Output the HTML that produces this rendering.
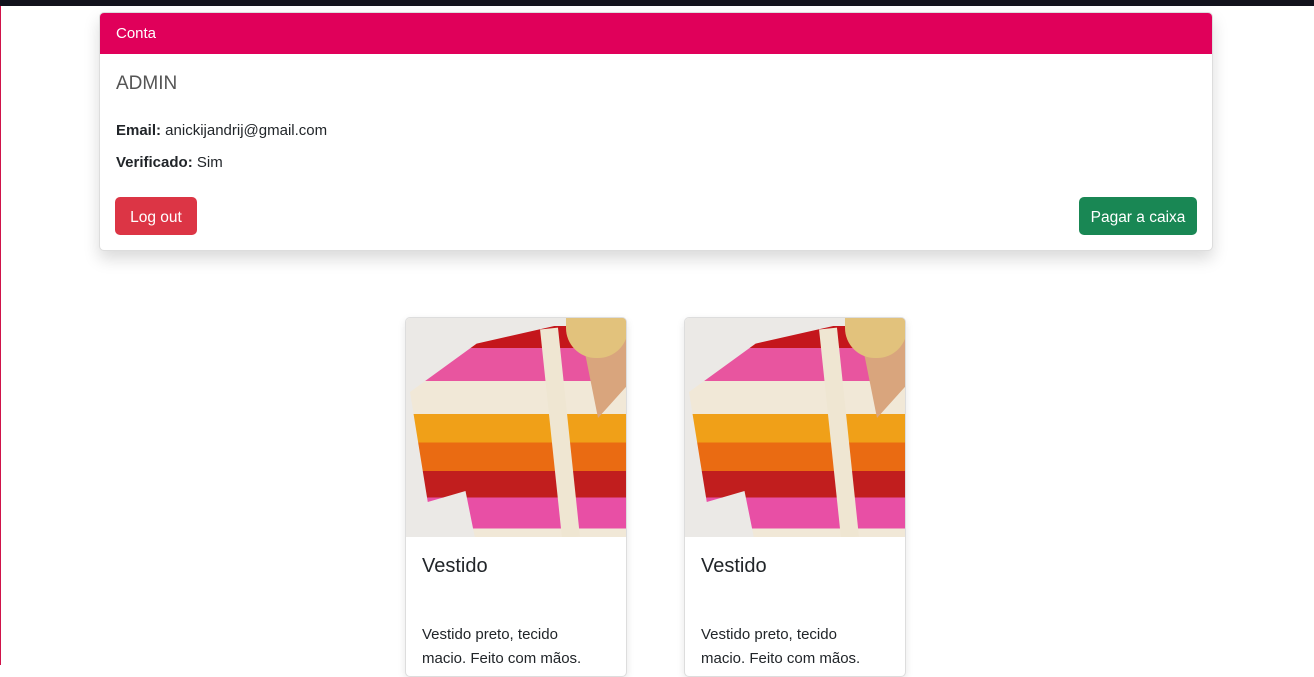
<!DOCTYPE html>
<html><head><meta charset="utf-8"><style>
*{box-sizing:border-box;margin:0;padding:0}
body{width:1314px;height:665px;overflow:hidden;background:#fff;font-family:"Liberation Sans",sans-serif;color:#212529;position:relative}
.top{position:absolute;left:0;top:0;width:1314px;height:6px;background:#12121c}
.edge{position:absolute;left:0;top:6px;width:1px;height:659px;background:#d0134a}
.acc{position:absolute;left:99px;top:12px;width:1114px;height:239px;border:1px solid #ddd;border-radius:5px;box-shadow:0 8px 16px rgba(0,0,0,.15);overflow:hidden;background:#fff}
.hd{height:41px;background:#e0005a;color:#fff;font-size:15px;padding:12px 16px}
.admin{position:absolute;left:16px;top:60px;font-size:19px;color:#555}
.l{position:absolute;left:16px;font-size:15px}
.btn{position:absolute;top:184px;height:38px;border-radius:5px;color:#fff;font-size:15.5px;line-height:41px;text-align:center}
.card{position:absolute;top:317px;width:222px;height:360px;border:1px solid #ddd;border-radius:5px;overflow:hidden;box-shadow:0 3px 8px rgba(0,0,0,.1);background:#fff}
.img{height:219px;position:relative;background:#ebe9e6;overflow:hidden}
.sw{position:absolute;left:4px;top:8px;width:222px;height:220px;background:linear-gradient(#c4161c 0 10%,#e8559f 10% 25%,#f1e8d7 25% 40%,#f0a018 40% 53%,#ea6b12 53% 66%,#c11e1e 66% 78%,#e84fa5 78% 92%,#f1e8d7 92%);clip-path:polygon(0 30%,30% 8%,65% 0,100% 0,100% 100%,30% 100%,25% 75%,8% 80%)}
.skin{position:absolute;left:168px;top:0;width:60px;height:100px;background:#d9a57d;clip-path:polygon(0 0,100% 0,100% 60%,40% 100%,20% 40%)}
.hair{position:absolute;left:160px;top:0;width:62px;height:40px;background:#e2c27c;border-radius:0 0 30px 30px}
.placket{position:absolute;left:145px;top:10px;width:18px;height:210px;background:#efe6d2;transform:rotate(-6deg)}
.t{position:absolute;left:16px;top:237px;font-size:20px}
.d{position:absolute;left:16px;top:305px;font-size:15px;line-height:24px;width:168px}
</style></head><body>
<div class="top"></div><div class="edge"></div>
<div class="acc">
<div class="hd">Conta</div>
<div class="admin">ADMIN</div>
<div class="l" style="top:109px"><b>Email:</b> anickijandrij@gmail.com</div>
<div class="l" style="top:141px"><b>Verificado:</b> Sim</div>
<div class="btn" style="left:15px;width:82px;background:#dc3545">Log out</div>
<div class="btn" style="right:15px;width:118px;background:#198754">Pagar a caixa</div>
</div>
<div class="card" style="left:405px"><div class="img"><div class="sw"></div><div class="skin"></div><div class="hair"></div><div class="placket"></div></div><div class="t">Vestido</div><div class="d">Vestido preto, tecido macio. Feito com mãos.</div></div>
<div class="card" style="left:684px"><div class="img"><div class="sw"></div><div class="skin"></div><div class="hair"></div><div class="placket"></div></div><div class="t">Vestido</div><div class="d">Vestido preto, tecido macio. Feito com mãos.</div></div>
</body></html>
